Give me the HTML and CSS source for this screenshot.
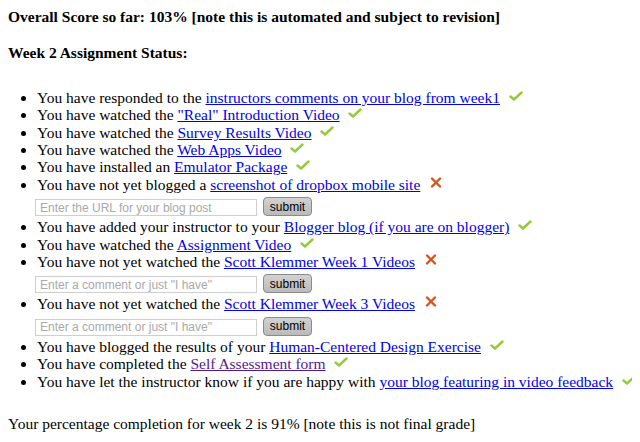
FILE: index.html
```html
<!DOCTYPE html>
<html lang="en">
<head>
  <meta charset="UTF-8" />
  <title>Week 2 Assignment Status</title>
  <link rel="stylesheet" href="styles.css">
</head>
<body>
  <p class="score"><b>Overall Score so far: 103% [note this is automated and subject to revision]</b></p>
  <p class="week-title"><b>Week 2 Assignment Status:</b></p>

  <ul class="status-list">
    <li>You have responded to the <a href="#">instructors comments on your blog from week1</a> <span class="done"></span></li>
    <li>You have watched the <a href="#">"Real" Introduction Video</a> <span class="done"></span></li>
    <li>You have watched the <a href="#">Survey Results Video</a> <span class="done"></span></li>
    <li>You have watched the <a href="#">Web Apps Video</a> <span class="done"></span></li>
    <li>You have installed an <a href="#">Emulator Package</a> <span class="done"></span></li>
    <li>You have not yet blogged a <a href="#">screenshot of dropbox mobile site</a> <span class="todo"></span>
      <form class="reply">
        <input type="text" placeholder="Enter the URL for your blog post">
        <button type="button">submit</button>
      </form>
    </li>
    <li>You have added your instructor to your <a href="#">Blogger blog (if you are on blogger)</a> <span class="done"></span></li>
    <li>You have watched the <a href="#">Assignment Video</a> <span class="done"></span></li>
    <li>You have not yet watched the <a href="#">Scott Klemmer Week 1 Videos</a> <span class="todo"></span>
      <form class="reply">
        <input type="text" placeholder="Enter a comment or just &quot;I have&quot;">
        <button type="button">submit</button>
      </form>
    </li>
    <li>You have not yet watched the <a href="#">Scott Klemmer Week 3 Videos</a> <span class="todo"></span>
      <form class="reply">
        <input type="text" placeholder="Enter a comment or just &quot;I have&quot;">
        <button type="button">submit</button>
      </form>
    </li>
    <li>You have blogged the results of your <a href="#">Human-Centered Design Exercise</a> <span class="done"></span></li>
    <li>You have completed the <a href="#" class="visited">Self Assessment form</a> <span class="done"></span></li>
    <li>You have let the instructor know if you are happy with <a href="#">your blog featuring in video feedback</a> <span class="done"></span></li>
  </ul>

  <p class="summary">Your percentage completion for week 2 is 91% [note this is not final grade]</p>
</body>
</html>
```

FILE: styles.css
```css
body {
  margin: 8px;
  font-family: "Liberation Serif", "Times New Roman", serif;
  font-size: 15.5px;
  line-height: 17.4px;
  color: #000;
  background: #fff;
}
p {
  margin: 0;
}
.week-title {
  margin-top: 19px;
}
.status-list {
  margin: 27px 0 0;
  padding-left: 29px;
}
.status-list li {
  white-space: nowrap;
}
a {
  color: #0000ee;
}
a.visited {
  color: #551a8b;
}
.done,
.todo {
  display: inline-block;
  width: 14px;
  height: 12px;
  margin-left: 5px;
  vertical-align: 1px;
  background-repeat: no-repeat;
}
.done {
  background-image: url("data:image/svg+xml,%3Csvg xmlns='http://www.w3.org/2000/svg' width='14' height='12' viewBox='0 0 14 12'%3E%3Cpath d='M1.5 6.5 L5 9.5 L12.5 2.5' fill='none' stroke='%2396c93d' stroke-width='2.4' stroke-linecap='round' stroke-linejoin='round'/%3E%3C/svg%3E");
}
.todo {
  background-image: url("data:image/svg+xml,%3Csvg xmlns='http://www.w3.org/2000/svg' width='14' height='12' viewBox='0 0 14 12'%3E%3Cpath d='M3 1.5 L11 9.5 M11 1.5 L3 9.5' fill='none' stroke='%23d4541c' stroke-width='2.4' stroke-linecap='round'/%3E%3C/svg%3E");
}
.reply {
  display: flex;
  align-items: flex-end;
  gap: 6px;
  margin: 4px 0 2px -2px;
}
.reply input {
  box-sizing: border-box;
  width: 222px;
  height: 17px;
  padding: 0 4px;
  border: 1px solid #cfcfcf;
  font-family: "Liberation Sans", Arial, sans-serif;
  font-size: 12px;
}
.reply input::placeholder {
  color: #a9a9a9;
}
.reply button {
  box-sizing: border-box;
  width: 49px;
  height: 19px;
  padding: 0;
  border: 1px solid #8a8a8a;
  border-radius: 4px;
  background: linear-gradient(#d2d2d2, #bababa);
  font-family: "Liberation Sans", Arial, sans-serif;
  font-size: 12px;
  color: #000;
}
.summary {
  margin-top: 25px;
}
```
